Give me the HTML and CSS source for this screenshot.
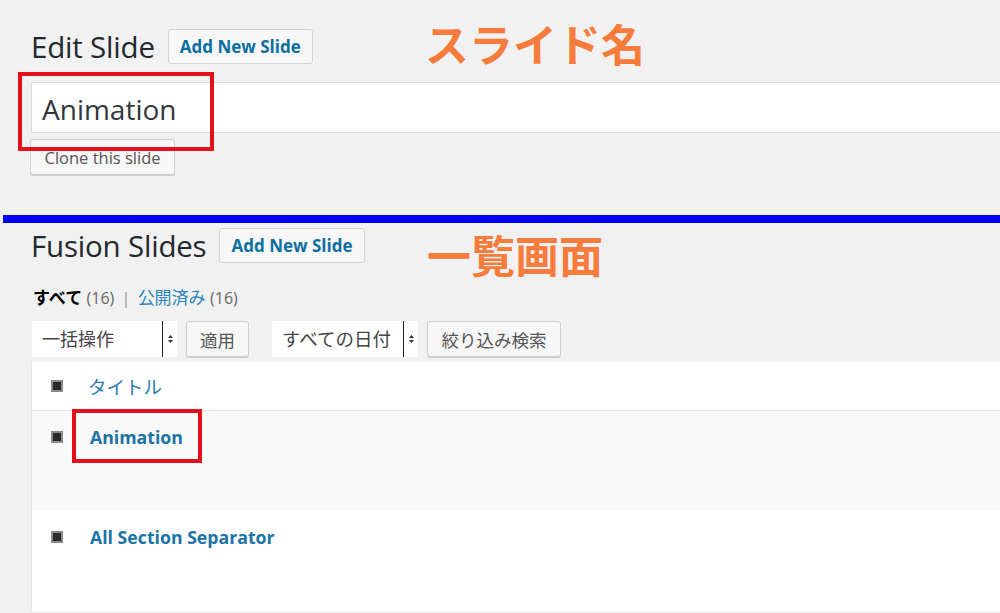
FILE: index.html
```html
<!DOCTYPE html>
<html lang="ja">
<head>
    <meta charset="UTF-8">
    <meta name="viewport" content="width=device-width, initial-scale=1.0">
    <title>Fusion Slides</title>
    <link rel="stylesheet" href="styles.css">
</head>
<body>
    <div class="edit-section">
        <div class="heading-row">
            <h1 class="page-title">Edit Slide</h1>
            <a href="#" class="add-button">Add New Slide</a>
        </div>
        <div class="title-field">Animation</div>
        <button class="plain-button clone-button">Clone this slide</button>

        <div class="note note-edit">スライド名</div>
        <div class="mark mark-title"></div>
    </div>

    <div class="divider"></div>

    <div class="list-section">
        <div class="heading-row">
            <h1 class="page-title">Fusion Slides</h1>
            <a href="#" class="add-button">Add New Slide</a>
        </div>

        <ul class="status-links">
            <li class="current">すべて <span class="count">(16)</span></li>
            <li class="sep">|</li>
            <li><a href="#">公開済み</a> <span class="count">(16)</span></li>
        </ul>

        <div class="filters">
            <div class="select-box bulk">
                <span class="select-label">一括操作</span>
                <span class="select-arrow">
                    <svg width="5" height="8" viewBox="0 0 5 8"><path d="M2.5 0 L5 3 H0 Z M2.5 8 L5 5 H0 Z" fill="#333"/></svg>
                </span>
            </div>
            <button class="plain-button apply">適用</button>
            <div class="select-box dates">
                <span class="select-label">すべての日付</span>
                <span class="select-arrow">
                    <svg width="5" height="8" viewBox="0 0 5 8"><path d="M2.5 0 L5 3 H0 Z M2.5 8 L5 5 H0 Z" fill="#333"/></svg>
                </span>
            </div>
            <button class="plain-button search">絞り込み検索</button>
        </div>

        <div class="slides-table">
            <div class="table-row head-row">
                <span class="check"></span>
                <a href="#" class="col-title">タイトル</a>
            </div>
            <div class="table-row item-row alt">
                <span class="check"></span>
                <a href="#" class="row-title">Animation</a>
            </div>
            <div class="table-row item-row">
                <span class="check"></span>
                <a href="#" class="row-title">All Section Separator</a>
            </div>
        </div>

        <div class="note note-list">一覧画面</div>
        <div class="mark mark-row"></div>
    </div>
</body>
</html>
```

FILE: styles.css
```css
* {
    margin: 0;
    padding: 0;
    box-sizing: border-box;
}

body {
    font-family: 'Open Sans', 'Noto Sans CJK JP', sans-serif;
    background: #f1f1f1;
    color: #23282d;
    overflow: hidden;
    height: 613px;
}

a {
    text-decoration: none;
}

.edit-section,
.list-section {
    position: relative;
    padding-left: 31px;
}

.edit-section {
    padding-top: 29px;
}

.heading-row {
    display: flex;
    align-items: center;
    height: 35px;
}

.page-title {
    font-size: 29.5px;
    font-weight: 400;
    color: #23282d;
    letter-spacing: -0.2px;
}

.add-button {
    margin-left: 13px;
    height: 35px;
    padding: 0 11px;
    display: flex;
    align-items: center;
    background: #f7f7f7;
    border: 1px solid #d4d4d4;
    border-radius: 3px;
    color: #0a6fa0;
    font-weight: 700;
    font-size: 17px;
}

.title-field {
    margin-top: 18px;
    height: 51px;
    background: #fff;
    border: 1px solid #dedede;
    border-right: none;
    padding-left: 10px;
    font-size: 28px;
    line-height: 52px;
    color: #32373c;
}

.plain-button {
    font-family: inherit;
    background: #f7f7f7;
    border: 1px solid #cfcfcf;
    border-radius: 3px;
    box-shadow: 0 1px 0 #ccc;
    color: #555;
    font-size: 16.5px;
    height: 36px;
    padding: 0 10px;
}

.clone-button {
    display: block;
    margin-top: 6px;
    margin-left: -1px;
    width: 145px;
}

.divider {
    margin: 40px 0 0 3px;
    height: 8px;
    background: #0000f5;
}

.list-section {
    padding-top: 5px;
    height: 389px;
}

.status-links {
    list-style: none;
    display: flex;
    align-items: center;
    gap: 7px;
    margin-top: 24px;
    padding-left: 2px;
    font-size: 17px;
    line-height: 22px;
    color: #555;
}

.status-links .current {
    color: #000;
    font-weight: 700;
}

.status-links .count {
    color: #666;
    font-weight: 400;
    font-size: 16px;
}

.status-links .sep {
    color: #999;
}

.status-links a {
    color: #2a86bb;
}

.filters {
    display: flex;
    align-items: center;
    margin-top: 12px;
    height: 36px;
}

.select-box {
    display: flex;
    align-items: stretch;
    height: 36px;
    background: #fff;
}

.select-box.bulk {
    margin-left: 1px;
    width: 145px;
}

.select-box.dates {
    margin-left: 23px;
    width: 146px;
}

.select-label {
    flex: 1;
    padding-left: 10px;
    font-size: 18px;
    line-height: 36px;
    color: #444;
    border-right: 1px solid #222;
    white-space: nowrap;
    overflow: hidden;
}

.dates .select-label {
    font-size: 18.5px;
}

.select-arrow {
    width: 14px;
    display: flex;
    align-items: center;
    justify-content: center;
}

.apply {
    margin-left: 9px;
    width: 63px;
    font-size: 17.5px;
}

.search {
    margin-left: 9px;
    width: 134px;
    font-size: 17.5px;
    padding: 0;
}

.slides-table {
    margin-top: 5px;
    background: #fff;
    border-left: 1px solid #e5e5e5;
}

.table-row {
    display: flex;
    align-items: flex-start;
    padding-left: 19px;
}

.head-row {
    height: 49px;
    align-items: center;
    border-bottom: 1px solid #e1e1e1;
}

.item-row {
    height: 100px;
    padding-top: 14px;
}

.item-row.alt {
    background: #f9f9f9;
}

.check {
    width: 12px;
    height: 12px;
    background: #2a2a2a;
    border: 2px solid #8a8a8a;
    flex-shrink: 0;
}

.item-row .check {
    margin-top: 6px;
}

.col-title {
    margin-left: 25px;
    font-size: 18.5px;
    color: #2a7aae;
}

.row-title {
    margin-left: 27px;
    font-size: 17.7px;
    font-weight: 700;
    color: #1c73a6;
    line-height: 24px;
}

/* annotations drawn over the screenshot */
.note {
    position: absolute;
    color: #f77b3b;
    font-family: 'Noto Sans CJK JP', sans-serif;
    font-weight: 700;
    font-size: 44px;
    line-height: 1;
}

.note-edit {
    left: 425px;
    top: 21px;
}

.note-list {
    left: 427px;
    top: 9px;
}

.mark {
    position: absolute;
    border: 4px solid #e3111b;
}

.mark-title {
    left: 18px;
    top: 72px;
    width: 196px;
    height: 79px;
}

.mark-row {
    left: 72px;
    top: 186px;
    width: 130px;
    height: 54px;
}
```
